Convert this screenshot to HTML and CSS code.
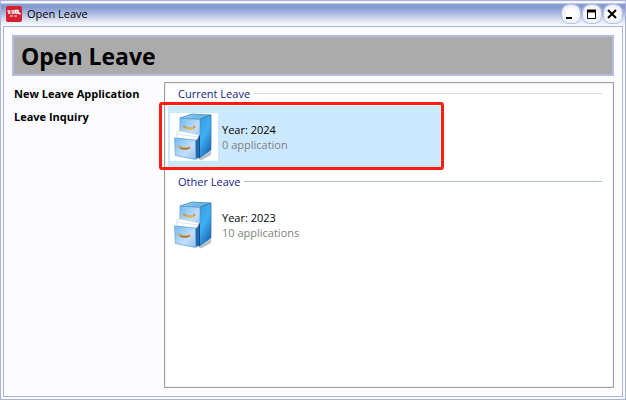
FILE: index.html
```html
<!DOCTYPE html>
<html lang="en">
<head>
<meta charset="utf-8">
<title>Open Leave</title>
<link rel="stylesheet" href="styles.css">
</head>
<body>
<svg class="defs" aria-hidden="true">
  <defs>
    <linearGradient id="top" x1="0" y1="0" x2="1" y2="0"><stop offset="0" stop-color="#8fcdf2"/><stop offset="1" stop-color="#5aa9e0"/></linearGradient>
    <linearGradient id="side" x1="0" y1="0" x2="0.5" y2="1"><stop offset="0" stop-color="#3d9ade"/><stop offset="0.55" stop-color="#3fb0f5"/><stop offset="1" stop-color="#1f70b8"/></linearGradient>
    <linearGradient id="front" x1="0" y1="0" x2="1" y2="1"><stop offset="0" stop-color="#6fbaf0"/><stop offset="0.6" stop-color="#c6dffb"/><stop offset="1" stop-color="#8fc0f2"/></linearGradient>
    <linearGradient id="brass" gradientUnits="userSpaceOnUse" x1="0" y1="0" x2="0" y2="4" spreadMethod="reflect"><stop offset="0" stop-color="#e9bf5c"/><stop offset="1" stop-color="#a87020"/></linearGradient>
    <symbol id="cabinet" viewBox="0 0 48 48">
      <path d="M29 46 41 38V42L31 47.500Z" fill="#b9bec6"/>
      <path d="M10 5 22 1 41 2 30 6.500Z" fill="url(#top)" stroke="#3b82b8" stroke-width=".7"/>
      <path d="M30 6.500 41 2V37L29 45.500Z" fill="url(#side)" stroke="#246da8" stroke-width=".7"/>
      <path d="M10 5 30 6.500V28H10Z" fill="url(#front)" stroke="#5b9fd6" stroke-width=".7"/>
      <path d="M25 25 30 22V44L26 46Z" fill="#174c85"/>
      <path d="M7 19 11 18 29 22 27 28 7 25Z" fill="#fff" stroke="#b8cad9" stroke-width=".6"/>
      <path d="M7 21 28 24" stroke="#cbd9e6" stroke-width=".7"/>
      <path d="M4.500 25 25.500 27V46.500L5.500 42.500Z" fill="url(#front)" stroke="#5b9fd6" stroke-width=".7"/>
      <path d="M26 27 29 25V44L26 46Z" fill="#236ca9"/>
      <path d="M14 13.500Q16 16 19.500 15.500Q23.500 16 24.500 14" fill="none" stroke="url(#brass)" stroke-width="2.200" stroke-linecap="round"/>
      <path d="M9.500 33.500Q11 36 15 35.500Q18 36 19.500 34.500" fill="none" stroke="url(#brass)" stroke-width="2.200" stroke-linecap="round"/>
    </symbol>
  </defs>
</svg>
<div class="window">
  <header class="titlebar">
    <svg class="app-icon" viewBox="0 0 16 16" aria-hidden="true">
      <rect width="16" height="16" rx="2" fill="#d7202f"/>
      <path d="M1.500 5H4.500M2 7H4.500M5.500 5H8.500M5.500 7H8.500M9.500 7.500V4.500H12V7H10M12 6.500 14.500 8" fill="none" stroke="#fff" stroke-width="1.500"/>
      <path d="M4 10H12" stroke="#f4a9bf" stroke-width="1.500" stroke-dasharray="3 1"/>
    </svg>
    <span class="title">Open Leave</span>
    <button class="winbtn" aria-label="Minimize"><svg viewBox="0 0 18 18"><path d="M4 13H10" stroke="#000" stroke-width="2"/></svg></button>
    <button class="winbtn" aria-label="Maximize"><svg viewBox="0 0 18 18"><path d="M4.500 5V13.500H12.500V5" fill="none" stroke="#000"/><path d="M4 6H13" stroke="#000" stroke-width="3"/></svg></button>
    <button class="winbtn" aria-label="Close"><svg viewBox="0 0 18 18"><path d="M4 5 12 13M12 5 4 13" stroke="#000" stroke-width="2"/></svg></button>
  </header>
  <main class="client">
    <h1 class="banner">Open Leave</h1>
    <div class="columns">
      <nav class="menu">
        <a href="#new">New Leave Application</a>
        <a href="#inquiry">Leave Inquiry</a>
      </nav>
      <div class="list">
        <section class="group">
          <h2 class="group-title current">Current Leave</h2>
          <div class="tile selected">
            <svg class="cabinet" aria-hidden="true"><use href="#cabinet"/></svg>
            <div><p class="year">Year: 2024</p><p class="count">0 application</p></div>
            <span class="marker"></span>
          </div>
        </section>
        <section class="group">
          <h2 class="group-title">Other Leave</h2>
          <div class="tile">
            <svg class="cabinet" aria-hidden="true"><use href="#cabinet"/></svg>
            <div><p class="year">Year: 2023</p><p class="count">10 applications</p></div>
          </div>
        </section>
      </div>
    </div>
  </main>
</div>
</body>
</html>
```
FILE: styles.css
```css
* { box-sizing: border-box; }
body {
  margin: 0;
  font-family: "Open Sans", "Noto Sans", sans-serif;
  font-size: 11px;
  line-height: 15px;
  color: #000;
}
h1, h2, p { margin: 0; }
.defs { position: absolute; width: 0; height: 0; }
.window {
  display: flex;
  flex-direction: column;
  min-height: 100vh;
  padding: 0 2px 2px;
  border: 1px solid #a9b1dc;
  background: #fbfcff;
}
.titlebar {
  display: flex;
  align-items: center;
  gap: 3px;
  height: 25px;
  margin: 0 -2px;
  padding: 0 3px 0 5px;
  background: linear-gradient(#f4f6fc 0, #f4f6fc 2px, #8c9fd0 3px, #8299cf 6px, #a9b8df 12px, #d5dcf0 18px, #f8f9fe 24px);
}
.app-icon { width: 16px; height: 16px; }
.title { flex: 1; padding-left: 2px; }
.winbtn {
  width: 18px;
  height: 18px;
  padding: 0;
  border: 0;
  border-radius: 7px;
  background: radial-gradient(#fff 30%, #dfe4f4 100%);
  box-shadow: 0 0 0 1px #b3bfe0;
}
.winbtn svg { display: block; width: 18px; height: 18px; }
.client {
  flex: 1;
  display: flex;
  flex-direction: column;
  gap: 6px;
  padding: 8px;
  border: 1px solid #a9b1dc;
  background: #fcfcff;
}
.banner {
  height: 41px;
  padding: 0 7px;
  border: 2px solid #b5bce0;
  background: #ababab;
  font-size: 23px;
  line-height: 38px;
}
.columns { flex: 1; display: flex; }
.menu {
  display: flex;
  flex-direction: column;
  gap: 8px;
  flex: 0 0 152px;
  padding: 4px 2px;
  font-weight: 700;
  white-space: nowrap;
}
.menu a { color: #000; text-decoration: none; }
.list {
  flex: 1;
  padding: 3px;
  border: 1px solid #a0a0a0;
  background: #fff;
  box-shadow: inset 0 0 0 1px #f0f0f0;
}
.group { margin-bottom: 7px; }
.group-title {
  display: flex;
  align-items: center;
  gap: 4px;
  margin: 0 8px 5px 10px;
  font-size: 11px;
  font-weight: 400;
  color: #14208a;
}
.group-title::after { content: ""; flex: 1; height: 1px; background: #adb9de; }
.group-title.current::after { background: #d8dcec; }
.tile {
  position: relative;
  display: flex;
  align-items: center;
  gap: 4px;
  width: 272px;
  height: 61px;
  padding: 0 2px;
}
.selected { background: #cce8ff; }
.cabinet { width: 48px; height: 48px; }
.selected .cabinet { background: #fff; }
.count { color: #808080; }
.marker {
  position: absolute;
  inset: -4px -4px -3px -9px;
  border: 3px solid #ff1b10;
  border-radius: 3px;
}
```
